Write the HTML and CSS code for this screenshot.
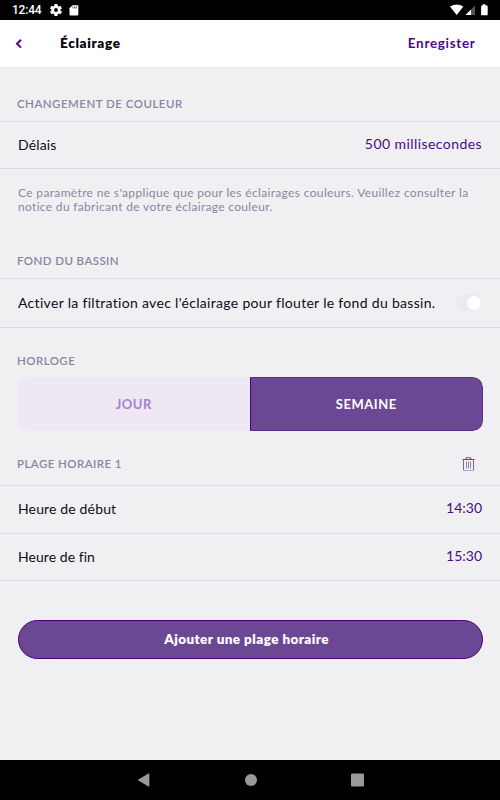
FILE: index.html
```html
<!DOCTYPE html>
<html lang="fr">
<head>
<meta charset="utf-8">
<title>Éclairage</title>
<link rel="stylesheet" href="styles.css">
</head>
<body>
<header class="status">
  <span class="clock">12:44</span>
  <svg class="gear" width="12" height="12" viewBox="2 2 20 20"><path fill="#fff" d="M19.4 13a7.5 7.5 0 0 0 0-2l2.1-1.6a.5.5 0 0 0 .1-.7l-2-3.400a.5.5 0 0 0-.6-.2l-2.500 1a7.300 7.300 0 0 0-1.700-1l-.4-2.600a.5.5 0 0 0-.5-.5h-4a.5.5 0 0 0-.5.5l-.3 2.600a7.300 7.300 0 0 0-1.700 1l-2.500-1a.5.5 0 0 0-.6.200l-2 3.400a.5.5 0 0 0 .1.700L4.500 11a7.500 7.500 0 0 0 0 2l-2.100 1.600a.5.5 0 0 0-.1.700l2 3.400c.1.200.4.300.6.200l2.500-1c.5.400 1.100.700 1.700 1l.4 2.600c0 .3.200.5.500.5h4c.3 0 .5-.2.500-.5l.4-2.600a7.300 7.300 0 0 0 1.700-1l2.500 1c.2.100.5 0 .6-.2l2-3.400a.5.5 0 0 0-.1-.7zM12 15.200a3.200 3.200 0 1 1 0-6.400 3.200 3.200 0 0 1 0 6.400z"/></svg>
  <svg class="card" width="10" height="11" viewBox="0 0 10 11"><path fill="#fff" d="M3.500.3H8.300Q9.300.3 9.300 1.300V9.500Q9.300 10.500 8.300 10.500H1.500Q.5 10.500.5 9.500V3.300z"/><path stroke="#000" stroke-width=".7" d="M4 1.500v2M5.700 1.500v2M7.400 1.500v2"/></svg>
  <svg class="signals" width="40" height="12" viewBox="0 0 40 12"><path fill="#fff" d="M0 2.600Q6.700-1.600 13.400 2.600L6.700 11z"/><path fill="#555" d="M15.500 11L25 1.500V11z"/><path fill="#fff" d="M15.500 11L21 5.500V11z"/><path fill="#fff" d="M32.500.3h3v1.200h1.300q.9 0 .9.900V10.400q0 .9-.9.900H32q-.9 0-.9-.9V2.400q0-.9.900-.9h.5z"/></svg>
</header>
<nav class="bar">
  <svg class="back" width="8" height="10" viewBox="0 0 8 10"><path fill="none" stroke="#4b0b85" stroke-width="2" d="M7 .8L3 4.700 7 8.600"/></svg>
  <h1 class="title">Éclairage</h1>
  <a class="save">Enregister</a>
</nav>
<main class="content">
  <h2 class="heading h-color">CHANGEMENT DE COULEUR</h2>
  <div class="row r-delay"><span class="label short">Délais</span><span class="value duration">500 millisecondes</span></div>
  <p class="note">Ce paramètre ne s'applique que pour les éclairages couleurs. Veuillez consulter la<br><span class="second">notice du fabricant de votre éclairage couleur.</span></p>
  <h2 class="heading h-pool">FOND DU BASSIN</h2>
  <div class="row r-pool"><span class="label">Activer la filtration avec l'éclairage pour flouter le fond du bassin.</span><span class="switch"></span></div>
  <h2 class="heading h-clock">HORLOGE</h2>
  <div class="tabs"><div class="tab">JOUR</div><div class="tab active">SEMAINE</div></div>
  <h2 class="heading h-range">PLAGE HORAIRE 1
    <svg class="trash" width="13" height="15" viewBox="0 0 13 15"><g fill="none"><path stroke="#6c4794" d="M.5 2.500h12M4 2.500V1q2.500-1 5 0v1.500"/><path stroke="#8262a8" d="M1.500 3v10.500M11.500 3v10.500"/><path stroke="#b3a4c9" d="M2 13.500h9"/><path stroke="#8262a8" stroke-width=".8" d="M4.500 4.500v7M6.500 4.500v7M8.500 4.500v7"/></g></svg></h2>
  <div class="row r-start"><span class="label short">Heure de début</span><span class="value">14:30</span></div>
  <div class="row r-end"><span class="label end">Heure de fin</span><span class="value">15:30</span></div>
  <button class="add">Ajouter une plage horaire</button>
</main>
<footer class="keys">
  <svg width="14" height="14" viewBox="0 0 14 14"><path fill="#999" d="M.5 7L11.500.4q.8-.4.800.5v12.200q0 .9-.8.500z"/></svg>
  <svg width="12" height="12" viewBox="0 0 12 12"><circle cx="6" cy="6" r="6" fill="#999"/></svg>
  <svg width="13" height="14" viewBox="0 0 13 14"><rect y=".5" width="13" height="13" rx="1" fill="#999"/></svg>
</footer>
</body>
</html>
```
FILE: styles.css
```css
* { box-sizing: border-box; margin: 0; }
body { width: 500px; height: 800px; display: flex; flex-direction: column; overflow: hidden; background: #f0f0f3; color: #100b20; font: 14px/20px Lato, sans-serif; }

.status { height: 20px; background: #000; color: #fff; display: flex; align-items: center; padding: 0 10px 0 12px; }
.clock { font: 500 12px/20px Roboto, sans-serif; letter-spacing: -.2px; }
.gear { margin-left: 9px; }
.card { margin-left: 7px; }
.signals { margin-left: auto; }

.bar { height: 48px; background: #fff; border-bottom: 1px solid #eeeef0; display: flex; align-items: center; padding: 0 24.5px 0 14px; }
.title, .save { font-size: 13.5px; font-weight: 800; letter-spacing: .67px; line-height: 20px; padding-bottom: 1px; color: #08040f; }
.title { margin-left: 38px; }
.save { margin-left: auto; color: #4b0b85; font-weight: 700; }

.content { flex: 1; display: flex; flex-direction: column; }
.heading { padding: 0 17px; display: flex; flex: none; justify-content: space-between; align-items: center; font-size: 11.5px; font-weight: 600; letter-spacing: .42px; color: #8d84a0; border-bottom: 1px solid #dcd6e8; }
.h-color { height: 35px; margin-top: 19px; letter-spacing: .48px; }
.h-pool { height: 35px; margin-top: 30px; }
.h-clock { height: 32px; margin-top: 17px; border: 0; }
.h-range { height: 43px; margin-top: 12px; }
.trash { margin-right: 8px; }

.row { display: flex; justify-content: space-between; align-items: center; padding: 0 18px; border-bottom: 1px solid #dcd6e8; }
.r-delay { height: 47px; }
.r-pool { height: 49px; padding-bottom: 1px; }
.r-start { height: 48px; padding-bottom: 1px; }
.r-end { height: 47px; padding-bottom: 1px; }
.label { letter-spacing: .31px; }
.label.short { letter-spacing: .15px; }
.label.end { letter-spacing: .05px; }
.value { color: #4b0b85; padding-bottom: 2px; }
.duration { letter-spacing: .43px; }
.note { margin: 17px 18px 0; font-size: 12px; line-height: 14px; letter-spacing: .345px; color: #8d84a0; white-space: nowrap; }
.second { letter-spacing: .32px; }

.switch { width: 26px; height: 17px; border-radius: 9px; background: #ede8f3; display: flex; align-items: center; justify-content: flex-end; padding-right: 1px; }
.switch::after { content: ""; width: 14px; height: 14px; border-radius: 50%; background: #fff; }

.tabs { display: flex; margin: 0 17.5px; height: 54px; border-radius: 10px; overflow: hidden; flex: none; }
.tab { flex: 0 0 232.5px; display: flex; align-items: center; justify-content: center; background: #ede8f3; color: #a581d4; font-size: 13px; font-weight: 700; letter-spacing: .5px; }
.tab.active { background: #6c4794; color: #fff; border: 1px solid #5d3190; border-left-color: #4b0082; border-radius: 0 10px 10px 0; }

.add { margin: 39px 17.5px 0; height: 39px; border-radius: 20px; border: 1px solid #4b0082; background: #6c4794; color: #fff; font: 800 13.5px/20px Lato, sans-serif; letter-spacing: .42px; padding: 0 7px 1px 0; }

.keys { height: 40px; background: #000; display: flex; justify-content: center; align-items: center; gap: 94px; }
```
